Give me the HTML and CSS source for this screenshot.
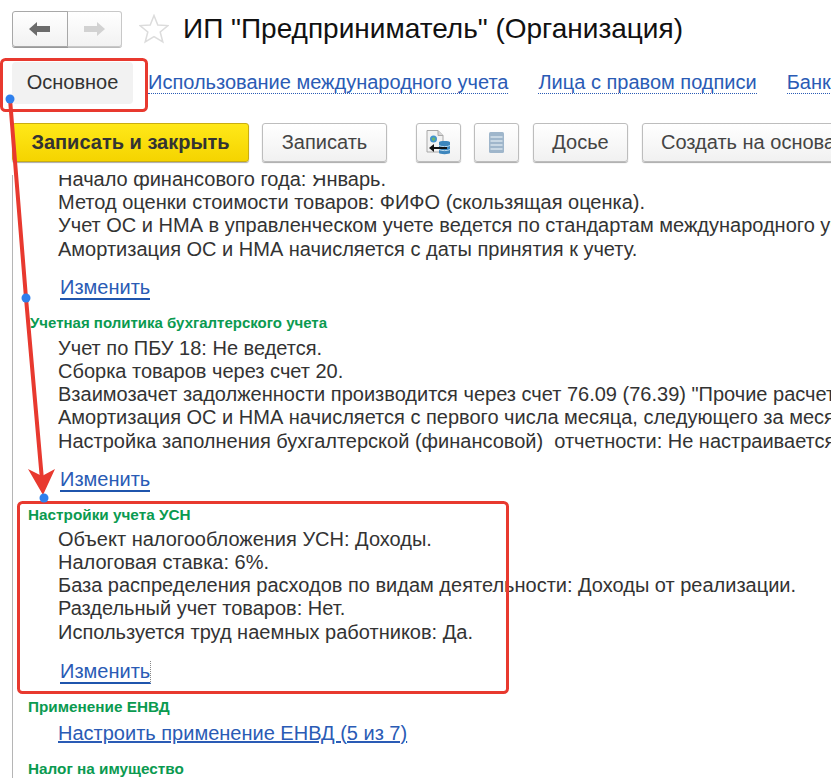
FILE: index.html
```html
<!DOCTYPE html>
<html lang="ru">
<head>
<meta charset="utf-8">
<title>ИП "Предприниматель" (Организация)</title>
<link rel="stylesheet" href="styles.css">
</head>
<body>
<div class="page">
  <header class="head">
    <div class="nav">
      <button class="nav-btn nav-back"><svg width="22" height="16" viewBox="0 0 22 16"><path d="M0 8 8 1V5H21V11H8V15Z" fill="#6b6b6b"/></svg></button>
      <button class="nav-btn nav-fwd"><svg width="22" height="16" viewBox="0 0 22 16"><path d="M22 8 14 1V5H1V11H14V15Z" fill="#d2d2d2"/></svg></button>
    </div>
    <svg class="star" width="30" height="30" viewBox="0 0 30 30"><path d="M15 1.5 18.8 11 29 11.6 21.2 18 23.8 28 15 22.6 6.2 28 8.8 18 1 11.6 11.2 11Z" fill="#fff" stroke="#dcdcdc" stroke-width="1.5"/></svg>
    <h1 class="title">ИП "Предприниматель" (Организация)</h1>
  </header>
  <nav class="tabs">
    <span class="tab-active">Основное</span>
    <a class="tab-link tab-a">Использование международного учета</a>
    <a class="tab-link tab-b">Лица с правом подписи</a>
    <a class="tab-link tab-c">Банковские счета</a>
  </nav>
  <div class="toolbar">
    <button class="btn btn-primary">Записать и закрыть</button>
    <button class="btn btn-save">Записать</button>
    <button class="btn btn-icon btn-icon-a"><svg width="25" height="25" viewBox="0 0 25 25"><path d="M1 .5H12L17 5.5V22H1Z" fill="#f2f2f2" stroke="#a8a8a8"/><path d="M12 .5V5.5H17" fill="#d5d5d5" stroke="#a8a8a8"/><circle cx="7.5" cy="9" r="3.5" fill="#3f93cf"/><path d="M5.5 8.5 8 7 9.5 9 7.5 11.5Z" fill="#6db56b"/><path d="M13 12C13 10.5 24 10.5 24 12V23C24 24.5 13 24.5 13 23Z" fill="#3d86bd"/><path d="M13 15.5C15 17 22 17 24 15.5M13 19.5C15 21 22 21 24 19.5" fill="none" stroke="#bcdaee"/><path d="M7 17H21V19H7Z" fill="#111"/><path d="M3 18 8 14V22Z" fill="#111"/></svg></button>
    <button class="btn btn-icon btn-icon-b"><svg width="15" height="21" viewBox="0 0 15 21"><rect width="15" height="21" rx="1.5" fill="#9fb6cb"/><path d="M1.5 5H13.5M1.5 9H13.5M1.5 13H13.5M1.5 17H13.5" stroke="#d7e3ed" stroke-width="1.5"/></svg></button>
    <button class="btn btn-dossier">Досье</button>
    <button class="btn btn-create">Создать на основании</button>
  </div>
  <main class="content">
    <div class="scroll">
      <section class="sec sec-first">
        <p class="line">Начало финансового года: Январь.</p>
        <p class="line">Метод оценки стоимости товаров: ФИФО (скользящая оценка).</p>
        <p class="line">Учет ОС и НМА в управленческом учете ведется по стандартам международного учета.</p>
        <p class="line">Амортизация ОС и НМА начисляется с даты принятия к учету.</p>
        <a class="change">Изменить</a>
      </section>
      <section class="sec sec-policy">
        <h2 class="sec-title sec-title-policy">Учетная политика бухгалтерского учета</h2>
        <p class="line">Учет по ПБУ 18: Не ведется.</p>
        <p class="line">Сборка товаров через счет 20.</p>
        <p class="line">Взаимозачет задолженности производится через счет 76.09 (76.39) "Прочие расчеты с разными дебиторами".</p>
        <p class="line">Амортизация ОС и НМА начисляется с первого числа месяца, следующего за месяцем принятия к учету.</p>
        <p class="line">Настройка заполнения бухгалтерской (финансовой)&nbsp; отчетности: Не настраивается.</p>
        <a class="change">Изменить</a>
      </section>
      <section class="sec sec-usn">
        <h2 class="sec-title">Настройки учета УСН</h2>
        <p class="line">Объект налогообложения УСН: Доходы.</p>
        <p class="line">Налоговая ставка: 6%.</p>
        <p class="line">База распределения расходов по видам деятельности: Доходы от реализации.</p>
        <p class="line">Раздельный учет товаров: Нет.</p>
        <p class="line">Используется труд наемных работников: Да.</p>
        <a class="change change-focus">Изменить</a>
      </section>
      <section class="sec sec-envd">
        <h2 class="sec-title">Применение ЕНВД</h2>
        <a class="setup">Настроить применение ЕНВД (5 из 7)</a>
      </section>
      <section class="sec sec-tax">
        <h2 class="sec-title">Налог на имущество</h2>
      </section>
    </div>
  </main>
  <svg class="overlay" width="831" height="778" viewBox="0 0 831 778">
    <g fill="none" stroke="#e8392f" stroke-width="3">
      <rect x="1.5" y="59.5" width="145" height="51" rx="4"/>
      <rect x="18.5" y="502.5" width="489" height="190" rx="4"/>
    </g>
    <path d="M10 99 26 298 42 480" fill="none" stroke="#e8392f" stroke-width="4"/>
    <path d="M28 469 43 495 55 469 42 476Z" fill="#e8392f"/>
    <circle cx="10" cy="99" r="4.5" fill="#2f80ed"/>
    <circle cx="26" cy="298" r="4.5" fill="#2f80ed"/>
    <circle cx="44" cy="498" r="4.5" fill="#2f80ed"/>
  </svg>
</div>
</body>
</html>
```
FILE: styles.css
```css
* { box-sizing: border-box; }
html, body { margin: 0; padding: 0; background: #fff; }
body { font-family: "Liberation Sans", Arial, sans-serif; color: #333; overflow: hidden; }
.page { position: relative; width: 831px; height: 778px; overflow: hidden; }
.head { display: flex; align-items: center; height: 60px; padding: 11px 0 13px 12px; }
.nav { display: flex; width: 111px; height: 36px; }
.nav-btn { width: 56px; height: 36px; padding: 0; display: flex; align-items: center; justify-content: center; background: linear-gradient(#fff, #f2f2f2); border: 1px solid #c8c8c8; box-shadow: 0 1px 0 #bbb; }
.nav-back { position: relative; border-color: #a8a8a8; border-radius: 3px 0 0 3px; box-shadow: 0 1px 0 #999; }
.nav-fwd { width: 55px; margin-left: -1px; border-left: 0; border-radius: 0 3px 3px 0; }
.star { margin-left: 16px; }
.title { margin: 0 0 0 14px; font-size: 28px; font-weight: 400; color: #111; white-space: nowrap; }
.tabs { display: flex; align-items: center; height: 43px; margin-top: 1px; padding-left: 12px; font-size: 20px; white-space: nowrap; }
.tab-active { display: flex; flex: none; align-items: center; justify-content: center; width: 121px; height: 42px; background: #f2f2f2; border-radius: 4px; color: #333; }
.tab-link { flex: none; color: #2a5bb5; border-bottom: 1px dotted #2a5bb5; line-height: 22px; }
.tab-a { margin-left: 15px; }
.tab-b { margin-left: 30px; }
.tab-c { margin-left: 30px; }
.toolbar { display: flex; align-items: flex-start; height: 52px; margin-top: 19px; padding-left: 12px; white-space: nowrap; }
.btn { height: 39px; flex: none; font: 20px "Liberation Sans", Arial, sans-serif; color: #444; background: linear-gradient(#fff, #f1f1f1); border: 1px solid #bdbdbd; border-radius: 3px; box-shadow: 0 1px 1px #aaa; padding: 0; display: flex; align-items: center; justify-content: center; }
.btn-primary { width: 237px; font-weight: 700; color: #333; background: linear-gradient(#ffe819, #f5d400); border-color: #c9ad12; }
.btn-save { width: 125px; margin-left: 13px; }
.btn-icon { width: 45px; }
.btn-icon-a { margin-left: 29px; }
.btn-icon-b { margin-left: 13px; }
.btn-dossier { width: 95px; margin-left: 14px; }
.btn-create { width: 230px; margin-left: 14px; justify-content: flex-start; padding-left: 18px; }
.content { height: 603px; margin-left: 12px; border-left: 1px solid #b5b5b5; overflow: hidden; }
.scroll { margin-top: -7px; white-space: nowrap; }
.sec { padding-left: 45px; }
.line { margin: 0; font-size: 20px; line-height: 23.2px; color: #333; }
.change { display: block; width: max-content; margin: 16px 0 0 2px; font-size: 20px; color: #2a5bb5; border-bottom: 2px solid #1f55ad; line-height: 21px; }
.sec-title { margin: 0 0 3px -30px; font-size: 15.3px; font-weight: 700; line-height: 20px; color: #0a9a50; }
.sec-policy { margin-top: 13px; }
.sec-usn { margin-top: 13px; }
.sec-policy .sec-title { margin-bottom: 4px; margin-left: -28px; font-size: 15px; }
.change-focus { margin-top: 17px; border-right: 1px dotted #888; }
.sec-envd { margin-top: 13px; }
.setup { display: block; width: max-content; margin-top: 5px; font-size: 20px; line-height: 23px; color: #2a5bb5; text-decoration: underline; }
.sec-tax { margin-top: 14px; }
.overlay { position: absolute; left: 0; top: 0; pointer-events: none; }
```
